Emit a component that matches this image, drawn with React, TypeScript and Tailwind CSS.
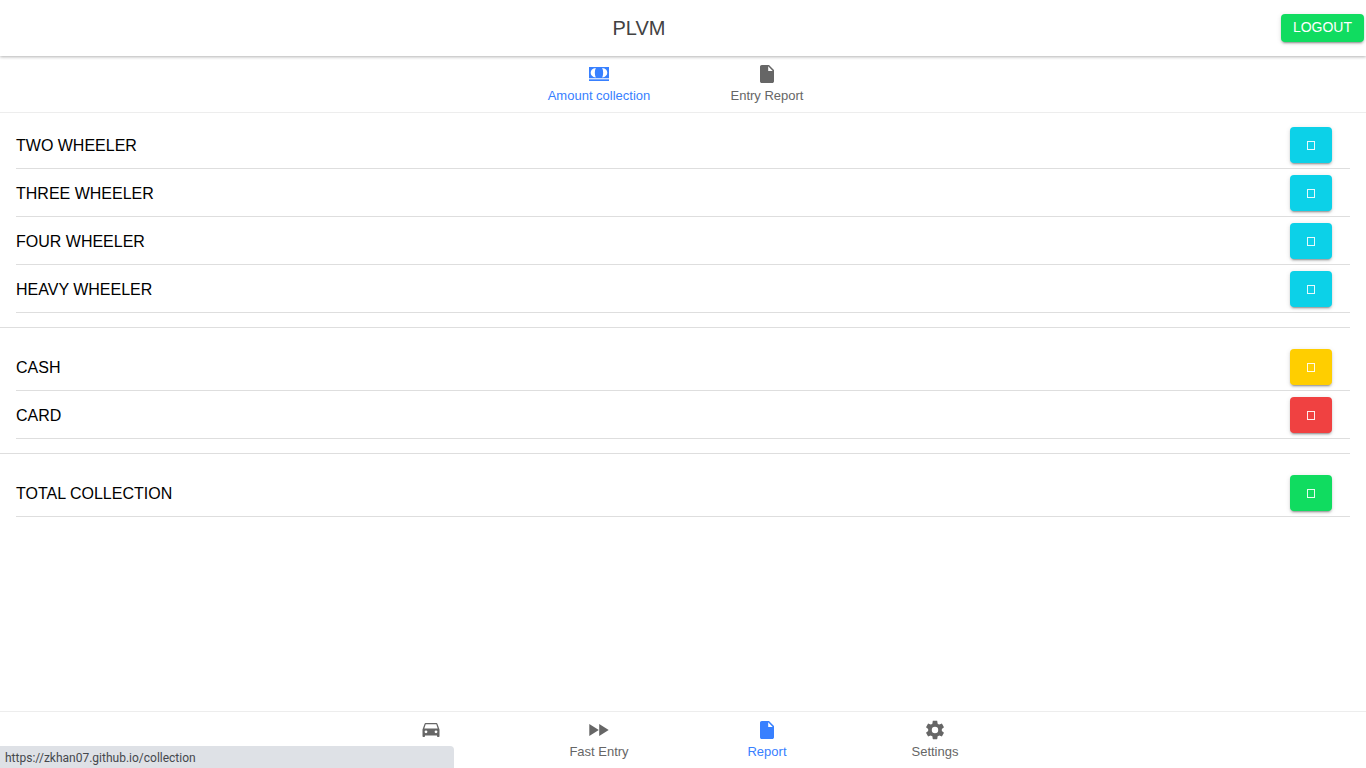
import type { ReactNode } from "react";

function CashIcon() {
  return (
    <svg viewBox="0 0 22 22" className="size-[22px]" fill="currentColor" aria-hidden="true">
      <path
        fillRule="evenodd"
        d="M1 4h20v11.300H1zM7.800 5C1 5.200 1 14.200 7.800 14.400C6.500 12 6.500 7.400 7.800 5zM14.200 5C15.500 7.400 15.500 12 14.200 14.400C21 14.200 21 5.200 14.200 5z"
      />
      <path d="M1 16.300h20v1.700H1z" />
    </svg>
  );
}

function DocumentIcon() {
  return (
    <svg viewBox="0 0 22 22" className="size-[22px]" fill="currentColor" aria-hidden="true">
      <path
        fillRule="evenodd"
        d="M5.800 2H13l5 5v11.200c0 1-.8 1.800-1.800 1.800H5.800C4.800 20 4 19.200 4 18.200V3.800C4 2.800 4.800 2 5.800 2zM12.200 3.300V8h4.500z"
      />
    </svg>
  );
}

function CarIcon() {
  return (
    <svg viewBox="0 0 22 22" className="size-[22px]" fill="currentColor" aria-hidden="true">
      <path
        fillRule="evenodd"
        d="M17.600 5.200C17.400 4.500 16.800 4 16 4H6C5.200 4 4.600 4.500 4.400 5.200L2.500 10.500V17.200c0 .5.300.8.800.8h.9c.5 0 .8-.3.800-.8V16.500h12v.7c0 .5.300.8.800.8h.9c.5 0 .8-.3.800-.8V10.500zM6 14.200a1.400 1.400 0 1 1 0-2.800a1.400 1.400 0 0 1 0 2.800zM16 14.200a1.400 1.400 0 1 1 0-2.800a1.400 1.400 0 0 1 0 2.800zM4.300 9.500L5.700 5.300h10.600l1.400 4.200z"
      />
    </svg>
  );
}

function FastForwardIcon() {
  return (
    <svg viewBox="0 0 22 22" className="size-[22px]" fill="currentColor" aria-hidden="true">
      <path d="M1.300 5v12l9.500-6zM11.200 5v12l9.500-6z" />
    </svg>
  );
}

function SettingsIcon() {
  return (
    <svg viewBox="0 0 24 24" className="size-[22px]" fill="currentColor" aria-hidden="true">
      <path d="M19.430 12.980c.04-.32.070-.64.070-.98s-.03-.66-.07-.98l2.110-1.650c.19-.15.240-.42.120-.64l-2-3.460c-.12-.22-.39-.3-.61-.22l-2.490 1c-.52-.4-1.080-.73-1.690-.98l-.38-2.650C14.460 2.180 14.250 2 14 2h-4c-.25 0-.46.180-.49.420l-.38 2.650c-.61.250-1.170.590-1.690.980l-2.490-1c-.23-.09-.49 0-.61.220l-2 3.460c-.13.220-.07.490.120.640l2.110 1.650c-.04.320-.07.650-.07.980s.03.660.070.980l-2.110 1.650c-.19.150-.24.420-.12.640l2 3.460c.12.220.390.300.610.220l2.490-1c.52.400 1.080.730 1.690.980l.38 2.650c.03.240.240.420.490.420h4c.25 0 .46-.18.490-.42l.38-2.650c.61-.25 1.170-.59 1.690-.98l2.490 1c.23.090.490 0 .61-.22l2-3.460c.12-.22.070-.49-.12-.64zM12 15.500a3.500 3.500 0 1 1 0-7a3.500 3.500 0 0 1 0 7z" />
    </svg>
  );
}

type TabProps = { icon: ReactNode; label?: string; name?: string; active?: boolean };

function Tab({ icon, label, name, active }: TabProps) {
  return (
    <a
      href={active ? "#current" : "#tab"}
      aria-label={name}
      className={`flex h-14 w-full max-w-[168px] flex-col items-center gap-px pt-[7px] text-[13px] leading-5 ${
        active ? "text-[#3880ff]" : "text-[#666666]"
      }`}
    >
      {icon}
      {label && <span>{label}</span>}
    </a>
  );
}

const tones = {
  cyan: "bg-[#0cd1e8]",
  yellow: "bg-[#ffce00]",
  red: "bg-[#f04141]",
  green: "bg-[#10dc60]",
};

type Entry = { label: string; tone: keyof typeof tones };

function Row({ label, tone }: Entry) {
  return (
    <li className="flex h-12 items-center justify-between border-b border-[#dedede] pr-[18px]">
      <span className="pt-0.5">{label}</span>
      <button
        type="button"
        aria-label={label}
        className={`flex h-9 w-[42px] items-center justify-center rounded pt-0.5 shadow-[0_3px_1px_-2px_rgba(0,0,0,0.2),0_2px_2px_0_rgba(0,0,0,0.14),0_1px_5px_0_rgba(0,0,0,0.12)] ${tones[tone]}`}
      >
        <span className="h-[9px] w-2 border border-white/90" />
      </button>
    </li>
  );
}

const groups: Entry[][] = [
  [
    { label: "TWO WHEELER", tone: "cyan" },
    { label: "THREE WHEELER", tone: "cyan" },
    { label: "FOUR WHEELER", tone: "cyan" },
    { label: "HEAVY WHEELER", tone: "cyan" },
  ],
  [
    { label: "CASH", tone: "yellow" },
    { label: "CARD", tone: "red" },
  ],
  [{ label: "TOTAL COLLECTION", tone: "green" }],
];

export default function App() {
  return (
    <div className="flex min-h-screen flex-col bg-white font-['Liberation_Sans',Arial,sans-serif] text-base text-black">
      <header className="z-10 grid h-14 grid-cols-[1fr_auto_1fr] items-center bg-white pr-0.5 shadow-[0_1px_3px_rgba(0,0,0,0.3)]">
        <h1 className="col-start-2 pr-[86px] text-xl text-[#424242]">PLVM</h1>
        <button
          type="button"
          className="h-7 justify-self-end rounded bg-[#10dc60] px-3 pb-0.5 text-sm text-white shadow-[0_3px_1px_-2px_rgba(0,0,0,0.2),0_2px_2px_0_rgba(0,0,0,0.14),0_1px_5px_0_rgba(0,0,0,0.12)]"
        >
          LOGOUT
        </button>
      </header>

      <nav className="flex justify-center border-b border-[#ededed]">
        <Tab icon={<CashIcon />} label="Amount collection" active />
        <Tab icon={<DocumentIcon />} label="Entry Report" />
      </nav>

      <main className="mr-4 flex-1 pt-2">
        {groups.map((group, i) => (
          <section key={i} className={i > 0 ? "mt-3.5 border-t border-[#dedede] pt-[15px]" : ""}>
            <ul className="pl-4">
              {group.map((entry) => (
                <Row key={entry.label} {...entry} />
              ))}
            </ul>
          </section>
        ))}
      </main>

      <footer className="relative border-t border-[#ededed]">
        <nav className="flex justify-center">
          <Tab icon={<CarIcon />} name="Vehicles" />
          <Tab icon={<FastForwardIcon />} label="Fast Entry" />
          <Tab icon={<DocumentIcon />} label="Report" active />
          <Tab icon={<SettingsIcon />} label="Settings" />
        </nav>
        <div className="absolute bottom-0 left-0 flex h-[22px] w-[454px] items-center rounded-tr bg-[#dee1e6] pt-0.5 pl-[5px] font-[Roboto,'Open_Sans',sans-serif] text-xs text-[#45484d]">
          https://zkhan07.github.io/collection
        </div>
      </footer>
    </div>
  );
}
